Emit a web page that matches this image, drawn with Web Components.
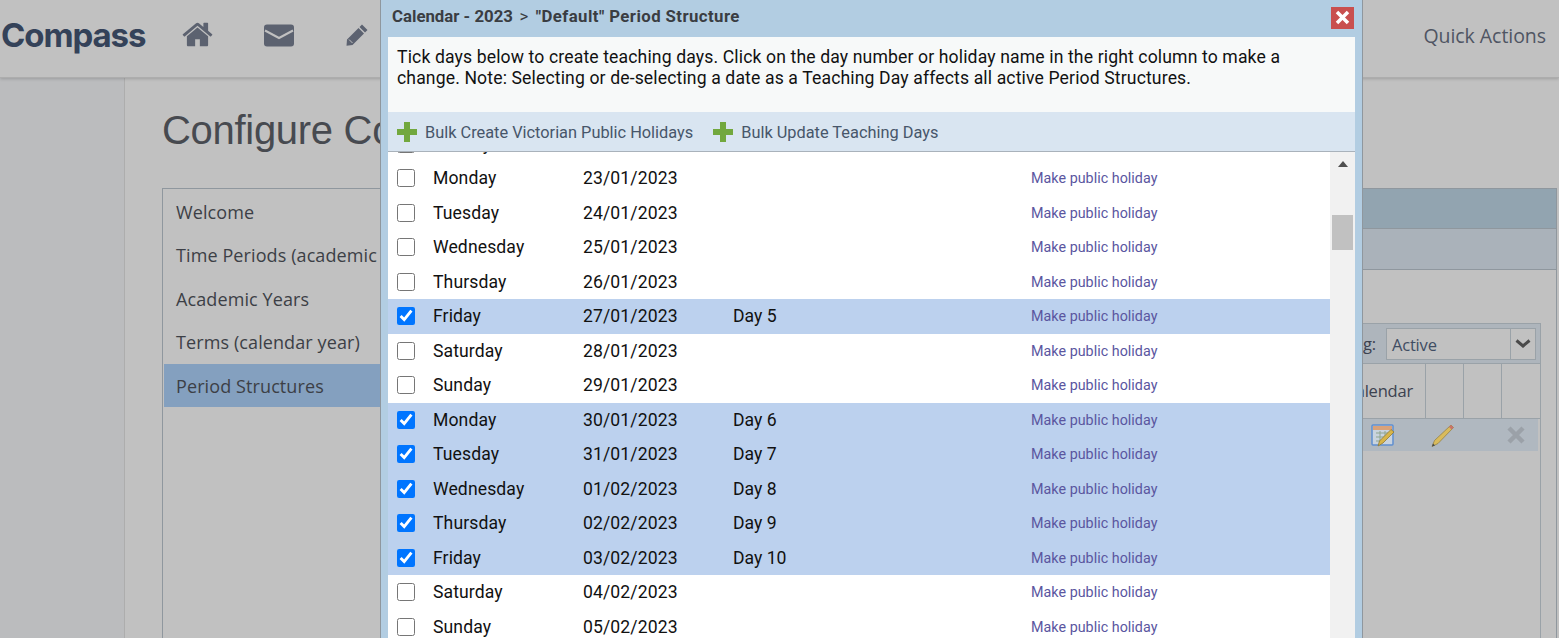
<!DOCTYPE html>
<html>
<head>
<meta charset="utf-8">
<title>Compass</title>
<style>
    html, body { margin: 0; height: 638px; overflow: hidden; background: #c1c1c1; }
</style>
</head>
<body>
<compass-app>
    <app-header slot="header"></app-header>
    <config-page slot="page"></config-page>
    <calendar-dialog slot="dialog"></calendar-dialog>
</compass-app>

<script>
// small helper so each component only declares its css and markup
function shadow(el, css, html) {
    el.attachShadow({ mode: 'open' }).innerHTML = `<style>${css}</style>${html}`;
}

class CompassApp extends HTMLElement {
    connectedCallback() {
        shadow(this, `
            :host { display: flex; flex-direction: column; position: relative; width: 1559px; height: 638px; overflow: hidden; }
            .dialog { position: absolute; left: 380px; top: -2px; }
        `, `
            <slot name="header"></slot>
            <slot name="page"></slot>
            <div class="dialog"><slot name="dialog"></slot></div>
        `);
    }
}

class AppHeader extends HTMLElement {
    connectedCallback() {
        shadow(this, `
            :host { display: flex; align-items: center; box-sizing: border-box; height: 78px; flex: none; padding: 0 13px 7px 1px;
                background: #c1c1c1; border-bottom: 1px solid #adadad; box-shadow: 0 1px 3px rgba(0,0,0,.18); position: relative; }
            .logo { font: 700 33px Inter, sans-serif; color: #344259; width: 179.500px; letter-spacing: -1.100px; }
            svg { display: block; fill: #5c6270; flex: none; }
            .home { margin: -2px 50.500px 0 0; }
            .mail { margin-right: 52px; }
            .quick { margin-left: auto; font: 400 19.500px "Open Sans", sans-serif; color: #4f5563; letter-spacing: -.05px; }
        `, `
            <div class="logo">Compass</div>
            <svg class="home" width="33" height="33" viewBox="0 0 1792 1792"><path d="M1472 992v480q0 26-19 45t-45 19h-384v-384H768v384H384q-26 0-45-19t-19-45V992q0-1 .5-3t.5-3l575-474 575 474q1 2 1 6zm223-69l-62 74q-8 9-21 11h-3q-13 0-21-7L896 424 204 1001q-12 8-24 7-13-2-21-11l-62-74q-8-10-7-23.5t11-21.5l719-599q32-26 76-26t76 26l244 204V288q0-14 9-23t23-9h192q14 0 23 9t9 23v408l219 182q10 8 11 21.5t-7 23.5z"/></svg>
            <svg class="mail" width="30" height="23" viewBox="0 0 30 23"><rect width="30" height="22" y=".5" rx="3"/><path d="M1 6.500 15 14 29 6.500" fill="none" stroke="#c1c1c1" stroke-width="2"/></svg>
            <svg width="22" height="22" viewBox="0 0 22 22"><path d="M16 .5 21.500 6 19 8.500 13.500 3ZM12.500 4 18 9.500 6.500 21 .5 21.800 1 15.500Z"/><path d="M3 15.500 6.500 19" stroke="#c1c1c1" stroke-width="1"/></svg>
            <div class="quick">Quick Actions</div>
        `);
    }
}

class ConfigPage extends HTMLElement {
    connectedCallback() {
        shadow(this, `
            :host { display: flex; flex: 1; min-height: 0; }
            .strip { width: 124px; flex: none; background: #bbbcbe; border-right: 1px solid #adadad; }
            main { flex: 1; min-width: 0; padding: 27px 2px 0 37px; display: flex; flex-direction: column; }
            h1 { margin: 0 0 33px; font: 400 40px/50px "Liberation Sans", sans-serif; color: #474a50; letter-spacing: -.3px; white-space: nowrap; height: 50px; }
            .cols { display: flex; flex: 1; min-height: 0; gap: 20px; }
        `, `
            <div class="strip"></div>
            <main>
                <h1>Configure Compass</h1>
                <div class="cols">
                    <side-nav></side-nav>
                    <structure-panel></structure-panel>
                </div>
            </main>
        `);
    }
}

class SideNav extends HTMLElement {
    connectedCallback() {
        const items = ['Welcome', 'Time Periods (academic year)', 'Academic Years', 'Terms (calendar year)', 'Period Structures'];
        shadow(this, `
            :host { display: block; width: 230px; flex: none; box-sizing: border-box; border: 1px solid #8f979e; border-bottom: 0; padding: .700px 1px 1px; overflow: hidden; }
            div { height: 43.500px; padding-left: 12px; font: 400 18px/44px "Open Sans", sans-serif; letter-spacing: .1px; color: #3c3f46; white-space: nowrap; overflow: hidden; }
            .on { background: #84a0bf; }
        `, items.map((t, i) => `<div class="${i === 4 ? 'on' : ''}">${t}</div>`).join(''));
    }
}

class StructurePanel extends HTMLElement {
    connectedCallback() {
        shadow(this, `
            :host { display: block; flex: 1; min-width: 0; box-sizing: border-box; border: 1px solid #8f979e; border-bottom: 0; font: 400 16.500px "Open Sans", sans-serif; color: #3c4250; }
            .bar { height: 39px; background: #92a4b0; border-bottom: 1px solid #8f979e; }
            .sub { height: 40px; background: #aab2ba; border-bottom: 1px solid #8f979e; }
            .inner { margin: 53px 15px 0 0; border: 1px solid #9aa2a8; border-bottom: 0; height: 400px; }
            .filter { display: flex; justify-content: flex-end; align-items: center; gap: 10px; height: 39px; background: #aeb5bc; border-bottom: 1px solid #9aa2a8; padding-right: 4px; letter-spacing: -.2px; }
            .select { display: flex; width: 150px; height: 32px; box-sizing: border-box; border: 1px solid #9aa2a8; background: #c1c1c1; }
            .select span { flex: 1; padding-left: 5px; line-height: 32px; color: #3f4d63; }
            .select i { display: flex; align-items: center; justify-content: center; width: 24px; border-left: 1px solid #9aa2a8; }
            .head { display: flex; height: 54px; border-bottom: 1px solid #9aa2a8; padding-right: 1px; }
            .head div { width: 37px; border-left: 1px solid #9aa2a8; }
            .head .name { flex: 1; border: 0; line-height: 54px; text-align: right; padding-right: 12px; letter-spacing: -.2px; }
            .row { display: flex; align-items: center; justify-content: flex-end; height: 32px; background: #b0b8c0; margin-right: 2px; }
            .row svg { display: block; flex: none; }
        `, `
            <div class="bar"></div>
            <div class="sub"></div>
            <div class="inner">
                <div class="filter">
                    <span>Showing:</span>
                    <div class="select"><span>Active</span><i><svg width="16" height="10" viewBox="0 0 16 10"><path d="M1.500 1.500 8 7l6.500-5.500" fill="none" stroke="#4a4a4a" stroke-width="3"/></svg></i></div>
                </div>
                <div class="head"><div class="name">Calendar</div><div></div><div></div><div></div></div>
                <div class="row">
                    <svg width="24" height="24" viewBox="0 0 24 24" style="margin-right:35px"><rect x="1" y="2" width="21" height="20" rx="1" fill="#c9d3de" stroke="#5f8fd0" stroke-width="1.500"/><rect x="2" y="3" width="19" height="4" fill="#d9a27a"/><path d="M5 10h12M5 14h8M5 18h5M9 8v12M14 8v8" stroke="#8fa58f"/><path d="M23 9 12 20l-5 3 1.500-5L20 6.500Z" fill="#d8b548" stroke="#8f7a36" stroke-width=".8"/></svg>
                    <svg width="26" height="26" viewBox="0 0 26 26" style="margin-right:51px"><path d="M21 3l2.500 2.500L8 21.500l-6 3 2.500-6Z" fill="#d9bb5c" stroke="#8e7a3c" stroke-width=".7"/><path d="M21 3l2.500 2.500-2 2-2.500-2.500Z" fill="#c9736b"/><path d="M2 24.500l1-3 2 2Z" fill="#44484c"/></svg>
                    <svg width="18" height="18" viewBox="0 0 18 18" style="margin-right:13px"><path d="M2 2 16 16M16 2 2 16" stroke="#9ba1a8" stroke-width="4.500"/></svg>
                </div>
            </div>
        `);
    }
}

class DayRow extends HTMLElement {
    connectedCallback() {
        const day = this.getAttribute('day');
        const teach = this.getAttribute('teach');
        shadow(this, `
            :host { display: flex; align-items: center; height: 34.500px; font: 400 17.600px Roboto, sans-serif; color: #111; white-space: nowrap; }
            :host([teach]) { background: #bcd1ee; }
            input { width: 18px; height: 18px; margin: 0 0 0 8.500px; flex: none; }
            .name { width: 150px; margin-left: 18.500px; letter-spacing: .1px; }
            .date { width: 150px; letter-spacing: .1px; }
            .no { width: 298px; }
            a { font-size: 14.300px; color: #5a569f; letter-spacing: .03px; }
        `, `
            <input type="checkbox" ${teach ? 'checked' : ''}>
            <span class="name">${day}</span>
            <span class="date">${this.getAttribute('date')}</span>
            <span class="no">${teach || ''}</span>
            <a>Make public holiday</a>
        `);
    }
}

class CalendarDialog extends HTMLElement {
    connectedCallback() {
        const rows = [
            ['Sunday', '22/01/2023'], ['Monday', '23/01/2023'], ['Tuesday', '24/01/2023'],
            ['Wednesday', '25/01/2023'], ['Thursday', '26/01/2023'], ['Friday', '27/01/2023', 'Day 5'],
            ['Saturday', '28/01/2023'], ['Sunday', '29/01/2023'], ['Monday', '30/01/2023', 'Day 6'],
            ['Tuesday', '31/01/2023', 'Day 7'], ['Wednesday', '01/02/2023', 'Day 8'], ['Thursday', '02/02/2023', 'Day 9'],
            ['Friday', '03/02/2023', 'Day 10'], ['Saturday', '04/02/2023'], ['Sunday', '05/02/2023'],
            ['Monday', '06/02/2023', 'Day 11']
        ];
        const plus = `<svg width="20" height="20" viewBox="0 0 20 20"><path d="M7 0h6v7h7v6h-7v7H7v-7H0V7h7Z" fill="#72a83e"/></svg>`;
        shadow(this, `
            :host { display: flex; flex-direction: column; box-sizing: border-box; width: 983px; height: 650px; background: #b2cde2;
                border-left: 1px solid #8f979e; border-right: 1px solid #8f979e; padding: 0 7px; font-family: Roboto, sans-serif; }
            .title { display: flex; align-items: center; justify-content: space-between; height: 39px; flex: none; padding: 0 1px 0 4px; }
            .title b { margin-bottom: 4px; font: 700 16.800px Roboto, sans-serif; color: #3a3d42; letter-spacing: .42px; white-space: nowrap; }
            .title b span { letter-spacing: 0; }
            .title b i { font-style: normal; font-weight: 400; margin: 0 7.500px 0 6.500px; letter-spacing: 0; }
            .close { display: flex; align-items: center; justify-content: center; width: 23px; height: 22px; background: #c9504f; }
            .close svg { display: block; }
            .desc { height: 75px; flex: none; box-sizing: border-box; padding: 10px 9px 0; background: #f7f9f9; color: #111; font-size: 17.600px; line-height: 21px; letter-spacing: .13px; }
            .tools { display: flex; align-items: center; gap: 20px; height: 40px; flex: none; box-sizing: border-box; padding: 0 0 0 9px; background: #d9e5f1; border-bottom: 1px solid #a9b2bb; }
            .tool { display: flex; align-items: center; gap: 8px; font-size: 16.350px; color: #47566a; white-space: nowrap; }
            .tool svg { display: block; flex: none; }
            .tool span { padding-top: 2px; }
            .body { display: flex; flex: 1; min-height: 0; background: #fff; }
            .list { flex: 1; min-width: 0; overflow: hidden; }
            .rows { margin-top: -25.300px; }
            .track { width: 25px; flex: none; background: #f1f1f1; box-sizing: border-box; padding: 9px 2px 0; }
            .arrow { width: 0; height: 0; margin: 0 auto 48px; border: 5.500px solid transparent; border-top: 0; border-bottom: 6px solid #505050; }
            .thumb { height: 35px; background: #c1c1c1; }
        `, `
            <div class="title"><b><span>Calendar - 2023</span><i>&gt;</i>"Default" Period Structure</b>
                <span class="close"><svg width="15" height="15" viewBox="0 0 15 15"><path d="M2 2l11 11M13 2 2 13" stroke="#fff" stroke-width="3.500"/></svg></span>
            </div>
            <div class="desc">Tick days below to create teaching days. Click on the day number or holiday name in the right column to make a change. Note: Selecting or de-selecting a date as a Teaching Day affects all active Period Structures.</div>
            <div class="tools">
                <span class="tool">${plus}<span>Bulk Create Victorian Public Holidays</span></span>
                <span class="tool">${plus}<span>Bulk Update Teaching Days</span></span>
            </div>
            <div class="body">
                <div class="list"><div class="rows">
                    ${rows.map(r => `<day-row day="${r[0]}" date="${r[1]}" ${r[2] ? `teach="${r[2]}"` : ''}></day-row>`).join('')}
                </div></div>
                <div class="track"><div class="arrow"></div><div class="thumb"></div></div>
            </div>
        `);
    }
}

customElements.define('compass-app', CompassApp);
customElements.define('app-header', AppHeader);
customElements.define('config-page', ConfigPage);
customElements.define('side-nav', SideNav);
customElements.define('structure-panel', StructurePanel);
customElements.define('day-row', DayRow);
customElements.define('calendar-dialog', CalendarDialog);
</script>
</body>
</html>
